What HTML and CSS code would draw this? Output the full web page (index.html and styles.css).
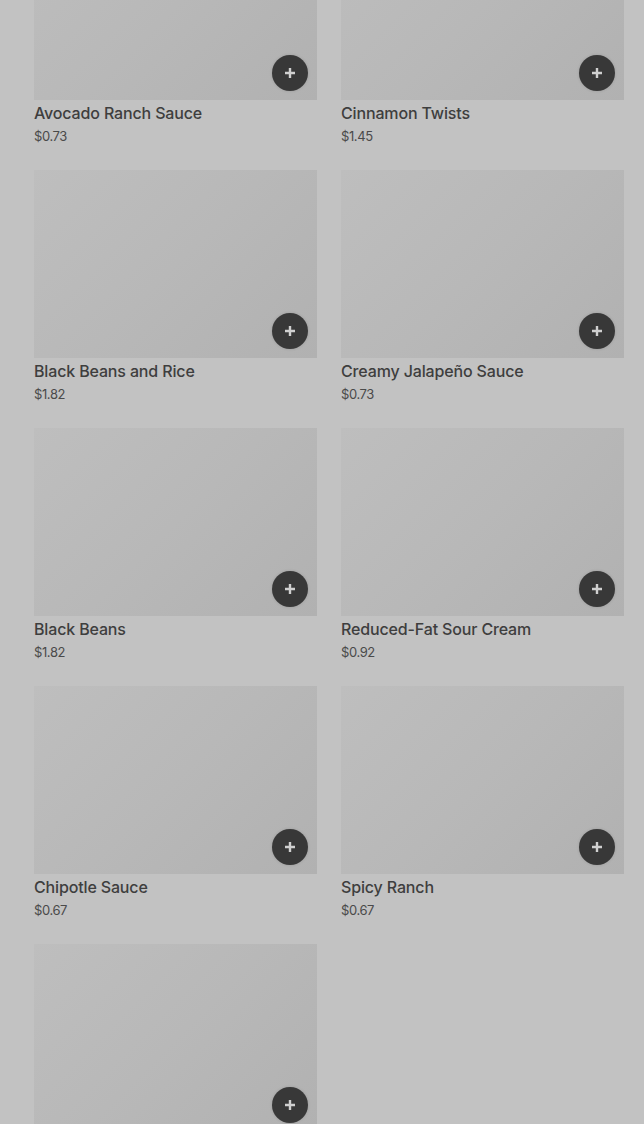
FILE: index.html
```html
<!DOCTYPE html>
<html>
<head>
<meta charset="utf-8">
<link rel="stylesheet" href="styles.css">
</head>
<body>
<div class="grid">
  <div class="card"><div class="img"><button class="add"><svg viewBox="0 0 12 12" width="12" height="12"><path d="M6 1v10M1 6h10" stroke="#d0d0d0" stroke-width="2.4"/></svg></button></div><div class="name">Avocado Ranch Sauce</div><div class="price">$0.73</div></div>
  <div class="card"><div class="img"><button class="add"><svg viewBox="0 0 12 12" width="12" height="12"><path d="M6 1v10M1 6h10" stroke="#d0d0d0" stroke-width="2.4"/></svg></button></div><div class="name">Cinnamon Twists</div><div class="price">$1.45</div></div>
  <div class="card"><div class="img"><button class="add"><svg viewBox="0 0 12 12" width="12" height="12"><path d="M6 1v10M1 6h10" stroke="#d0d0d0" stroke-width="2.4"/></svg></button></div><div class="name">Black Beans and Rice</div><div class="price">$1.82</div></div>
  <div class="card"><div class="img"><button class="add"><svg viewBox="0 0 12 12" width="12" height="12"><path d="M6 1v10M1 6h10" stroke="#d0d0d0" stroke-width="2.4"/></svg></button></div><div class="name">Creamy Jalapeño Sauce</div><div class="price">$0.73</div></div>
  <div class="card"><div class="img"><button class="add"><svg viewBox="0 0 12 12" width="12" height="12"><path d="M6 1v10M1 6h10" stroke="#d0d0d0" stroke-width="2.4"/></svg></button></div><div class="name">Black Beans</div><div class="price">$1.82</div></div>
  <div class="card"><div class="img"><button class="add"><svg viewBox="0 0 12 12" width="12" height="12"><path d="M6 1v10M1 6h10" stroke="#d0d0d0" stroke-width="2.4"/></svg></button></div><div class="name">Reduced-Fat Sour Cream</div><div class="price">$0.92</div></div>
  <div class="card"><div class="img"><button class="add"><svg viewBox="0 0 12 12" width="12" height="12"><path d="M6 1v10M1 6h10" stroke="#d0d0d0" stroke-width="2.4"/></svg></button></div><div class="name">Chipotle Sauce</div><div class="price">$0.67</div></div>
  <div class="card"><div class="img"><button class="add"><svg viewBox="0 0 12 12" width="12" height="12"><path d="M6 1v10M1 6h10" stroke="#d0d0d0" stroke-width="2.4"/></svg></button></div><div class="name">Spicy Ranch</div><div class="price">$0.67</div></div>
  <div class="card"><div class="img"><button class="add"><svg viewBox="0 0 12 12" width="12" height="12"><path d="M6 1v10M1 6h10" stroke="#d0d0d0" stroke-width="2.4"/></svg></button></div></div>
</div>
</body>
</html>
```

FILE: styles.css
```css
html, body {
  margin: 0;
  padding: 0;
  background: #c2c2c2;
  overflow: hidden;
  height: 1124px;
}
body {
  font-family: Inter, "Liberation Sans", sans-serif;
  color: #3b3b3b;
}
.grid {
  display: grid;
  grid-template-columns: 283px 283px;
  column-gap: 24px;
  row-gap: 0;
  padding: 0 20px 0 34px;
  margin-top: -88px;
}
.card {
  display: flex;
  flex-direction: column;
  height: 258px;
}
.img {
  position: relative;
  height: 188px;
  flex: none;
  background: linear-gradient(135deg, #bebebe 0%, #b8b8b8 50%, #b1b1b1 100%);
}
.add {
  position: absolute;
  right: 9px;
  bottom: 9px;
  width: 36px;
  height: 36px;
  border: none;
  border-radius: 50%;
  background: #383838;
  padding: 0;
  display: flex;
  align-items: center;
  justify-content: center;
  box-shadow: 0 0 3px rgba(0,0,0,0.15);
}
.add svg { display: block; }
.name {
  margin-top: 3px;
  font-size: 16px;
  line-height: 20px;
  font-weight: 500;
  color: #3e3e3e;
  letter-spacing: -0.15px;
}
.price {
  margin-top: 4px;
  font-size: 13px;
  line-height: 18px;
  font-weight: 400;
  color: #4a4a4a;
  letter-spacing: -0.4px;
}
```
